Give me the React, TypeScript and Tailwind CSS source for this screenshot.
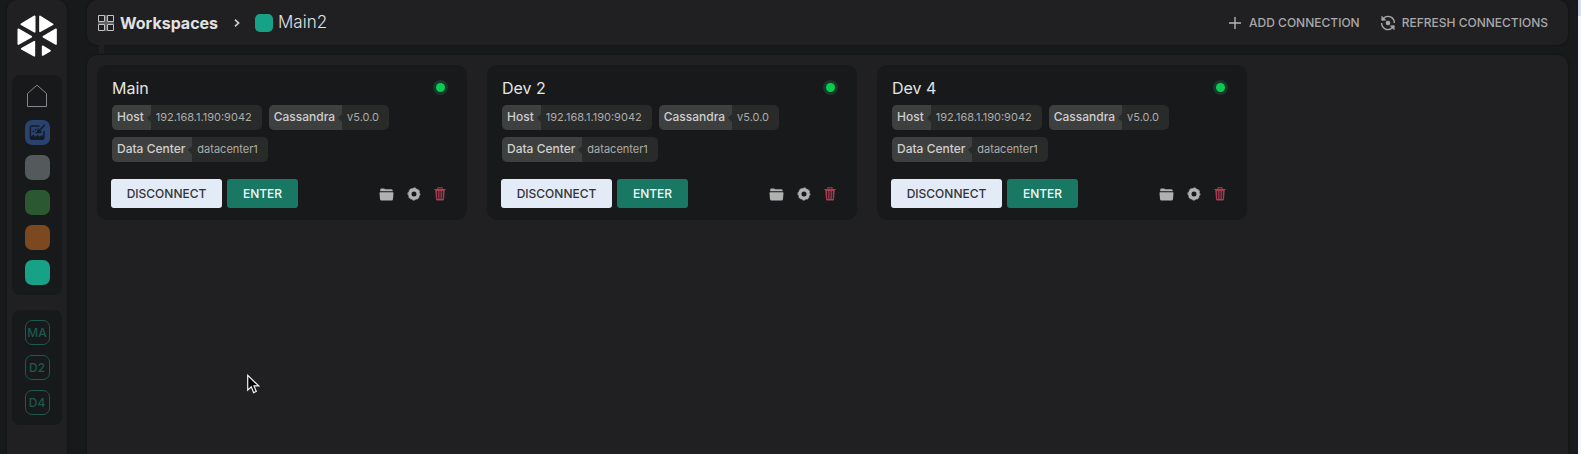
import React from "react";

const connections = [
  { name: "Main", host: "192.168.1.190:9042", version: "v5.0.0", dataCenter: "datacenter1" },
  { name: "Dev 2", host: "192.168.1.190:9042", version: "v5.0.0", dataCenter: "datacenter1" },
  { name: "Dev 4", host: "192.168.1.190:9042", version: "v5.0.0", dataCenter: "datacenter1" },
];

const workspaces = [
  { name: "Workspace 1", color: "bg-[#545a5c]" },
  { name: "Workspace 2", color: "bg-[#2c5831]" },
  { name: "Workspace 3", color: "bg-[#7b4820]" },
  { name: "Main2", color: "bg-[#17a186]" },
];

function Logo() {
  return (
    <svg viewBox="51 43 120 126" className="h-[42px] w-10" fill="#fff" stroke="#fff" strokeWidth="5" strokeLinejoin="round" aria-hidden="true">
      <path d="M64 71 104 47V93Z" />
      <path d="M120 47 158 71 120 92Z" />
      <path d="M55 86 94 108 55 130Z" />
      <path d="M168 86 130 108 168 130Z" />
      <path d="M65 144 103 123V165Z" />
      <path d="M128 137 150 150 128 163Z" />
    </svg>
  );
}

function HomeIcon() {
  return (
    <svg viewBox="0 0 22 24" className="h-6 w-[22px]" fill="none" stroke="#85878a" strokeWidth="1" aria-hidden="true">
      <path d="M1.5 22.5V9.5L11 1.2 20.5 9.5V22.5Z" />
    </svg>
  );
}

function SandboxIcon() {
  return (
    <svg viewBox="0 0 17 17" className="size-[17px]" fill="none" stroke="#151b26" strokeWidth="1.4" aria-hidden="true">
      <path d="M10.5 2H3Q1.4 2 1.4 3.6V14Q1.4 15.4 3 15.4H13.6Q15 15.4 15 14V7" />
      <path d="M15.8.8 10.6 6.4M9.3 5.2 12 8 8.6 8.6Z" fill="#151b26" />
      <path d="M2 12 4.5 10.8 6.5 12.8 8.5 11 10.5 12.4 14.5 11V15H2Z" fill="#151b26" stroke="none" />
      <path d="M3.6 7.4H5.4M6.6 4.8V6.6M6.4 8.6H8" />
    </svg>
  );
}

function WorkspacesIcon() {
  return (
    <svg viewBox="0 0 16 16" className="size-4" fill="none" stroke="#c4c4c4" strokeWidth="1" aria-hidden="true">
      <path d="M.5.5H6.5V6.5H.5ZM9.5.5H15.5V6.5H9.5ZM.5 9.5H6.5V15.5H.5ZM9.5 9.5H15.5V15.5H9.5Z" />
      <path d="M8 0V16M0 8H16" stroke="#77787a" strokeWidth="2" opacity=".75" />
    </svg>
  );
}

function RefreshIcon() {
  return (
    <svg viewBox="0 0 16 16" className="size-4" fill="none" stroke="#a8a8a9" strokeWidth="1.4" aria-hidden="true">
      <path d="M4.4 2.6A6.3 6.3 0 0 1 14.3 8" />
      <path d="M11.6 13.4A6.3 6.3 0 0 1 1.7 8" />
      <path d="M1.8 1.2V5.2H5.8ZM14.2 14.8V10.8H10.2Z" fill="#a8a8a9" strokeWidth=".6" />
      <path d="M1.8 5.2 4.6 2.4M14.2 10.8 11.4 13.6" />
      <circle cx="8" cy="8" r="2.3" fill="#a8a8a9" stroke="none" />
    </svg>
  );
}

function FolderIcon() {
  return (
    <svg viewBox="0 0 15 13" className="h-[13px] w-[15px]" fill="#b1b1b1" aria-hidden="true">
      <path d="M1.2 3.2V1.8Q1.2.5 2.5.5H5L6.3 1.3H12.4Q13.8 1.3 13.8 3V3.2Z" />
      <path d="M1.2 4.2H13.8Q14.6 4.2 14.5 5.1L14 10.9Q13.9 12.4 12.4 12.4H2.6Q1.1 12.4 1 10.9L.5 5.1Q.4 4.2 1.2 4.2Z" />
    </svg>
  );
}

function GearIcon() {
  return (
    <svg viewBox="0 0 14 14" className="size-[14px]" fill="none" stroke="#b1b1b1" aria-hidden="true">
      <circle cx="7" cy="7" r="4.2" strokeWidth="3.4" />
      <circle cx="7" cy="7" r="6" strokeWidth="1" strokeDasharray="2.6 2.112" strokeDashoffset="1.3" />
    </svg>
  );
}

function TrashIcon() {
  return (
    <svg viewBox="0 0 12 14" className="h-[14px] w-3" fill="none" aria-hidden="true">
      <path d="M1.2 2.6H10.8L10 12.3Q9.9 13.5 8.8 13.5H3.2Q2.1 13.5 2 12.3Z" fill="#a93c50" />
      <path d="M.4 2.5H11.6M4 2.2V.8H8V2.2" stroke="#a93c50" strokeWidth="1.1" />
      <path d="M3.7 4V12M6 4V12M8.3 4V12" stroke="#17191a" strokeWidth="1" />
    </svg>
  );
}

function Chip({ label, value }: { label: string; value: string }) {
  return (
    <div className="flex h-[25px] overflow-hidden rounded-[5px] bg-[#292a2a]">
      <dt className="relative bg-[#3e3f3f] pr-[7px] pl-[5px] text-xs leading-[23px] font-medium text-[#cfcfcf]">
        {label}
        <span className="absolute top-[9px] right-0 border-y-4 border-r-4 border-y-transparent border-r-[#292a2a]" />
      </dt>
      <dd className="pr-[10px] pl-[5px] text-[11px] leading-[25px] text-[#acacac]">{value}</dd>
    </div>
  );
}

function ConnectionCard({ connection }: { connection: (typeof connections)[number] }) {
  return (
    <article className="flex h-[155px] w-[370px] flex-col rounded-[10px] bg-[#17191a] px-[14px]">
      <div className="flex h-10 items-center justify-between pt-[5px] pr-[5px] pl-px">
        <h2 className="text-base text-[#e4e4e4]">{connection.name}</h2>
        <span className="flex size-[15px] items-center justify-center rounded-full bg-[#19382a]" role="img" aria-label="Connected">
          <span className="size-[9px] rounded-full bg-[#05ce50]" />
        </span>
      </div>
      <dl className="flex flex-wrap gap-[7px] pl-px">
        <Chip label="Host" value={connection.host} />
        <Chip label="Cassandra" value={connection.version} />
        <Chip label="Data Center" value={connection.dataCenter} />
      </dl>
      <div className="mt-[17px] flex gap-[5px]">
        <button type="button" className="h-[29px] w-[111px] rounded-[3px] bg-[#e3ebf7] text-xs font-medium text-[#333436]">
          DISCONNECT
        </button>
        <button type="button" className="h-[29px] w-[71px] rounded-[3px] bg-[#187864] text-xs font-medium text-[#f3f8f7]">
          ENTER
        </button>
        <div className="ml-auto flex items-center gap-[13px] pt-px pr-[7px]">
          <button type="button" aria-label="Open folder"><FolderIcon /></button>
          <button type="button" aria-label="Settings"><GearIcon /></button>
          <button type="button" aria-label="Delete"><TrashIcon /></button>
        </div>
      </div>
    </article>
  );
}

function Sidebar() {
  return (
    <nav aria-label="Workspaces" className="flex w-[60px] shrink-0 flex-col items-center rounded-t-[10px] bg-[#202022] pt-[15px] shadow-[0_0_1px_1px_#151617]">
      <Logo />
      <div className="mt-[18px] flex w-[50px] flex-col items-center gap-[10px] rounded-lg bg-[#17191a] pt-2 pb-[10px]">
        <a href="#home" aria-label="Home" className="mb-[2px] flex h-[25px] items-center">
          <HomeIcon />
        </a>
        <a href="#sandbox" aria-label="Sandbox" className="flex size-[25px] items-center justify-center rounded-[7px] bg-[#29426f]">
          <SandboxIcon />
        </a>
        {workspaces.map((w) => (
          <a key={w.name} href="#workspace" aria-label={w.name} className={`size-[25px] rounded-[7px] ${w.color}`} />
        ))}
      </div>
      <div className="mt-[15px] flex w-[50px] flex-col items-center gap-[10px] rounded-lg bg-[#17191a] py-[10px]">
        {["MA", "D2", "D4"].map((t) => (
          <a key={t} href="#connection" className="flex size-[25px] items-center justify-center rounded-[7px] border border-[#1c5a4d] text-xs font-medium text-[#1c5a4d]">
            {t}
          </a>
        ))}
      </div>
    </nav>
  );
}

export default function App() {
  return (
    <div className="flex min-h-screen bg-[#17191a] pl-[7px] font-['Inter','Liberation_Sans',sans-serif]">
      <Sidebar />
      <main className="ml-5 flex min-w-0 flex-1 flex-col">
        <header className="flex h-[45px] items-center justify-between rounded-[10px] bg-[#202022] pr-5 pl-[11px] shadow-[0_0_1px_1px_#151617]">
          <div className="flex items-center text-[#e2e2e2]">
            <WorkspacesIcon />
            <h1 className="ml-[6px] text-base font-bold">Workspaces</h1>
            <svg viewBox="0 0 6 8" className="mr-[15px] ml-4 h-2 w-[6px]" fill="none" stroke="#c8c8c8" strokeWidth="1.7" aria-hidden="true">
              <path d="M1 .7 4.6 4 1 7.3" />
            </svg>
            <span className="size-[18px] rounded-[5px] bg-[#17a186]" />
            <span className="ml-[5px] text-[17px] font-light">Main2</span>
          </div>
          <div className="flex gap-5 text-xs font-medium text-[#a8a8a9]">
            <button type="button" className="flex items-center gap-2">
              <svg viewBox="0 0 12 12" className="size-3" stroke="#b4b4b4" strokeWidth="1.4" aria-hidden="true">
                <path d="M6 0V12M0 6H12" />
              </svg>
              ADD CONNECTION
            </button>
            <button type="button" className="flex items-center gap-[6px]">
              <RefreshIcon />
              REFRESH CONNECTIONS
            </button>
          </div>
        </header>
        <div className="ml-3 h-[10px] w-[5px] bg-[#202022]" />
        <section aria-label="Connections" className="flex flex-1 flex-wrap content-start gap-5 rounded-t-[10px] bg-[#202022] p-[10px] shadow-[0_0_1px_1px_#151617]">
          {connections.map((c) => (
            <ConnectionCard key={c.name} connection={c} />
          ))}
        </section>
      </main>
      <div className="ml-[10px] w-[3px] shrink-0 bg-[#f2f6fd]">
        <div className="h-4 bg-[#d2def5]" />
      </div>
      <svg viewBox="0 0 13 21" className="absolute top-[374px] left-[247px] h-[21px] w-[13px]" fill="#050505" stroke="#f2f2f2" strokeWidth="1.2" aria-hidden="true">
        <path d="M.7 1.3V16.2L4.3 12.8 6.6 18.6 9.3 17.4 7 11.9H11.7Z" />
      </svg>
    </div>
  );
}
